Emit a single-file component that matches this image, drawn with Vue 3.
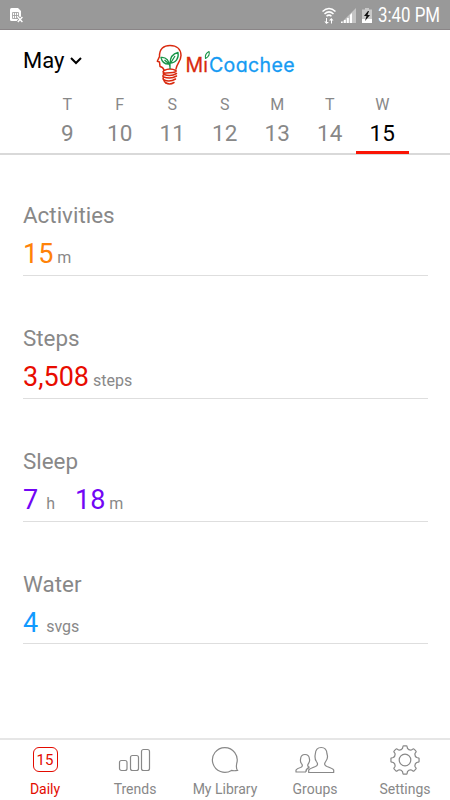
<script setup>
import { shallowRef } from 'vue'

const selected = shallowRef(6)

const days = [
  { name: 'T', date: 9 },
  { name: 'F', date: 10 },
  { name: 'S', date: 11 },
  { name: 'S', date: 12 },
  { name: 'M', date: 13 },
  { name: 'T', date: 14 },
  { name: 'W', date: 15 }
]

const metrics = [
  { key: 'activities', label: 'Activities', values: [{ value: '15', unit: 'm' }] },
  { key: 'steps', label: 'Steps', values: [{ value: '3,508', unit: 'steps' }] },
  { key: 'sleep', label: 'Sleep', values: [{ value: '7', unit: 'h' }, { value: '18', unit: 'm' }] },
  { key: 'water', label: 'Water', values: [{ value: '4', unit: 'svgs' }] }
]

const tabs = [
  { key: 'daily', label: 'Daily' },
  { key: 'trends', label: 'Trends' },
  { key: 'library', label: 'My Library' },
  { key: 'groups', label: 'Groups' },
  { key: 'settings', label: 'Settings' }
]

function point(radius, degrees) {
  const angle = degrees * Math.PI / 180
  return `${(16 + radius * Math.cos(angle)).toFixed(2)} ${(16 + radius * Math.sin(angle)).toFixed(2)}`
}

// eight rounded teeth around the centre of a 32px box
function gearPath() {
  let d = `M${point(13.7, -8)}`
  for (let a = 0; a < 360; a += 45) {
    d += `Q${point(14.3, a - 8)} ${point(14.1, a - 5)}L${point(14.1, a + 5)}`
    d += `Q${point(14.3, a + 8)} ${point(13.5, a + 9)}L${point(11.9, a + 12)}`
    d += `Q${point(10.3, a + 22.5)} ${point(11.9, a + 33)}L${point(13.5, a + 36)}`
  }
  return d + 'Z'
}

const gear = gearPath()
</script>

<template>
  <main class="screen">
    <div class="status-bar">
      <svg class="sim" width="15" height="16" viewBox="0 0 15 16">
        <path d="M1.5 0H8l3 3v6L8 13H1.5Q0 13 0 11.5v-10Q0 0 1.5 0Z" fill="#fff" />
        <path d="M2.5 4.5h6v6h-6zM4.5 4.5v6M6.5 4.5v6M2.5 7.5h6" fill="none" stroke="#999" stroke-width=".8" />
        <path d="m7.8 9 4.6 5M12.4 9l-4.6 5" stroke="#999" stroke-width="3" />
        <path d="m7.8 9 4.6 5M12.4 9l-4.6 5" stroke="#fff" stroke-width="1.4" />
      </svg>
      <div class="status-right">
        <svg width="51" height="18" viewBox="0 0 51 18">
          <g fill="none" stroke="#fff" stroke-width="1.5">
            <path d="M0.5 4.5Q7 -1.5 13.5 4.5M2.5 7Q7 2.8 11.5 7M4.5 9.3Q7 7 9.5 9.3" />
          </g>
          <path d="M5 11v4H7L4.5 17 2.3 14.5H4V11ZM9 16.5v-3H7L9.3 11l2.2 2.5H10v3Z" fill="#fff" />
          <path d="M34 1v15H19Z" fill="#c4c4c4" />
          <path d="M19 16v-1.5h1.5V16ZM22 16v-3h1.8v3ZM25 16v-5h1.8v5ZM28 16V8l2-2v10Z" fill="#fff" />
          <path d="M40 2.5h3V1h4v1.5h3V16H40Z" fill="#c9c9c9" />
          <path d="M40 12h10v4H40Z" fill="#fff" />
          <path d="m46 4-4 5h2.5L43 14l5-6h-2.5L47 4Z" fill="#111" />
        </svg>
        <span class="clock">3:40 PM</span>
      </div>
    </div>

    <header class="header">
      <div class="title-row">
        <button class="month">
          May
          <svg width="12" height="8" viewBox="0 0 12 8"><path d="m1 1 5 5 5-5" fill="none" stroke="#000" stroke-width="2" /></svg>
        </button>
        <svg class="logo" width="142" height="44" viewBox="0 0 142 44">
          <g fill="none" stroke="#d9290e" stroke-width="1.5" stroke-linecap="round" stroke-linejoin="round">
            <path d="M8 26Q7 23 4 22.5L3.5 18 1.3 17.3 3.5 12.5C3.2 4.5 8 1.4 14 1.4C21 1.4 25 5.5 25 11.5C25 17.5 20.5 19.5 20 25" />
            <path d="M8 26.5Q14 23.5 20 26.5Q21 28.5 14 28.8Q5 29 8 30.5Q15 33 20.5 29.5M7.5 33Q15 35.5 20.5 32M8 36Q14 38.5 19.5 35M10 39Q14 41 18 38.5" />
            <path d="M8 26.5Q6 28 8 28.8M8 30.5Q6 32 7.5 33Q6.5 35 8 36Q8 38 10 39" />
          </g>
          <g fill="none" stroke="#189447" stroke-width="1.3" stroke-linejoin="round">
            <path d="M14 25V20C14 13 17 9.5 22 8.5C23 14 20 19 14 19M14 23C13 16 10 13 5 13.5C6 18.5 9 20.5 14 20M14 20 19 12M13 20 8.5 16" />
            <path d="M49.5 14.5Q48.5 10 53 7.5Q54.5 11.5 49.5 14.5Z" stroke-width="1.1" />
          </g>
          <text x="29.5" y="28" textLength="22.5" class="logo-mi">Mı</text>
          <text x="53" y="28" textLength="85.5" class="logo-name">Coachee</text>
        </svg>
      </div>
      <nav class="days">
        <button v-for="(day, index) in days" :key="day.date" class="day" :class="{ active: index === selected }" @click="selected = index">
          <span>{{ day.name }}</span>
          <strong>{{ day.date }}</strong>
        </button>
      </nav>
    </header>

    <div class="metrics">
      <section v-for="metric in metrics" :key="metric.key" class="metric" :class="metric.key">
        <h2>{{ metric.label }}</h2>
        <p>
          <span v-for="item in metric.values" :key="item.unit" class="amount">
            <strong>{{ item.value }}</strong>
            <small>{{ item.unit }}</small>
          </span>
        </p>
      </section>
    </div>

    <nav class="tab-bar">
      <button v-for="tab in tabs" :key="tab.key" class="tab" :class="tab.key">
        <span v-if="tab.key === 'daily'" class="date-icon">15</span>
        <svg v-else width="42" height="32" viewBox="0 0 42 32" fill="none" stroke="currentColor" stroke-width="1.2">
          <g v-if="tab.key === 'trends'">
            <rect x="5.5" y="16.5" width="7.5" height="10" rx="2" />
            <rect x="16.5" y="11.5" width="8" height="15" rx="2" />
            <rect x="27.5" y="5.5" width="8" height="21" rx="2" />
          </g>
          <path v-else-if="tab.key === 'library'" d="M32.7 19.5A12.4 12.4 0 1 0 27.5 26.4Q30 27.1 33.5 26.4Q31.8 24.5 32.7 19.5Z" />
          <g v-else-if="tab.key === 'groups'" stroke-linejoin="round">
            <path d="M14.7 28.5V26Q16 24.5 21.5 22.5C24 21.4 24 19.5 22.4 17.5C20.5 15 20.8 12.5 21.3 10C21.6 5.4 24 3.5 27.2 3.5C30.7 3.5 32.8 5.7 33 10C34 12.7 33.3 15.5 31.7 17.5C30 19.8 30.3 21.4 33 22.5Q38.7 24.5 39.7 26V28.5Z" />
            <path d="M12 28H2V26Q3 24.5 6.5 23.5C8.7 22.7 8.7 21 7.5 19.6C6.2 18 6.3 16.2 6.6 14.8C6.8 12 8.3 10.5 11 10.5C13.8 10.5 15.2 12 15.4 14.8C15.9 16.5 15.4 18.3 14.4 19.6C13.3 21.2 13.5 22.5 15.5 23.4M12 28Q11.5 25 15.5 23.4" />
          </g>
          <g v-else transform="translate(5 0)">
            <path :d="gear" stroke-linejoin="round" />
            <circle cx="16" cy="16" r="5.8" />
          </g>
        </svg>
        <span class="tab-label">{{ tab.label }}</span>
      </button>
    </nav>
  </main>
</template>

<style>
body {
  background: #fff;
}
</style>

<style scoped>
.screen {
  width: 450px;
  height: 800px;
  display: flex;
  flex-direction: column;
  background: #fff;
  color: #888;
  font-family: Roboto, "Liberation Sans", sans-serif;
  overflow: hidden;
}

button {
  padding: 0;
  border: 0;
  color: inherit;
  font: inherit;
  background: none;
}

.status-bar {
  flex: 0 0 30px;
  height: 30px;
  min-height: 0;
  box-sizing: border-box;
  padding: 0 11px 0 10px;
  display: flex;
  align-items: center;
  justify-content: space-between;
  background: #999;
  border-bottom: 1px solid #8a8587;
}

.sim {
  margin-top: 3px;
}

.status-right {
  display: flex;
  align-items: center;
  gap: 5px;
}

.status-right svg {
  margin-top: 2px;
}

.clock {
  width: 61px;
  padding-top: 3px;
  color: #fff;
  font-size: 19.5px;
  line-height: 24px;
  white-space: nowrap;
  transform: scaleX(.865);
  transform-origin: left;
}

.header {
  flex: 0 0 125px;
  box-sizing: border-box;
  display: flex;
  flex-direction: column;
  border-bottom: 2px solid #d9d9d9;
}

.title-row {
  flex: 0 0 64px;
  display: flex;
  align-items: flex-start;
  padding-left: 23px;
}

.month {
  width: 133px;
  margin-top: 17px;
  display: flex;
  align-items: center;
  gap: 6px;
  color: #000;
  font-size: 22px;
  line-height: 28px;
}

.logo {
  margin-top: 14px;
}

.logo text {
  font-family: Inter, Lato, sans-serif;
  font-feature-settings: "cv11";
  font-size: 19.5px;
  font-weight: 400;
  stroke-width: .3px;
}

.logo .logo-mi {
  fill: #d9290e;
  stroke: #d9290e;
}

.logo .logo-name {
  fill: #159bf3;
  stroke: #159bf3;
}

.days {
  flex: 1;
  display: grid;
  grid-template-columns: repeat(7, 52.5px);
  padding-left: 41px;
}

.day {
  box-sizing: border-box;
  display: flex;
  flex-direction: column;
  align-items: center;
  border-bottom: 3px solid transparent;
  margin-bottom: -1px;
}

.day span {
  font-size: 16px;
  line-height: 22px;
}

.day strong {
  margin-top: 3px;
  font-size: 22.5px;
  line-height: 28px;
  font-weight: 400;
}

.day.active {
  border-color: #fa1505;
}

.day.active strong {
  color: #000;
}

.metrics {
  flex: 1;
  padding: 0 22px 0 23px;
}

.metric {
  height: 122.75px;
  box-sizing: border-box;
  padding-top: 48px;
  border-bottom: 1px solid #dedede;
}

.metric:first-child {
  height: 121px;
  padding-top: 46px;
}

.metric h2 {
  margin: 0;
  font-size: 22.4px;
  line-height: 28px;
  font-weight: 400;
}

.metric p {
  margin: 8px 0 0;
  display: flex;
  gap: 20px;
}

.amount {
  display: flex;
  align-items: baseline;
  gap: 4px;
}

.amount strong {
  font-size: 27px;
  line-height: 34px;
  font-weight: 400;
}

.amount small {
  font-size: 16px;
}

.activities strong {
  color: #ff8208;
}

.steps strong {
  color: #e80c00;
}

.sleep strong {
  color: #7206f5;
}

.water strong {
  color: #119aff;
}

.sleep .amount:first-child,
.water .amount {
  gap: 8px;
}

.tab-bar {
  flex: 0 0 62px;
  box-sizing: border-box;
  display: grid;
  grid-template-columns: repeat(5, 90px);
  border-top: 2px solid #e6e6e6;
}

.tab {
  display: flex;
  flex-direction: column;
  align-items: center;
  justify-content: flex-start;
  padding-top: 4px;
}

.tab svg {
  display: block;
}

.tab.daily {
  color: #e30b00;
}

.date-icon {
  box-sizing: border-box;
  width: 25px;
  height: 25px;
  margin: 3px 0 4px;
  border: 1px solid currentColor;
  border-radius: 6px;
  font-size: 15px;
  line-height: 24px;
  text-align: center;
}

.tab-label {
  margin-top: 5px;
  font-size: 14px;
  line-height: 17px;
  white-space: nowrap;
}
</style>
